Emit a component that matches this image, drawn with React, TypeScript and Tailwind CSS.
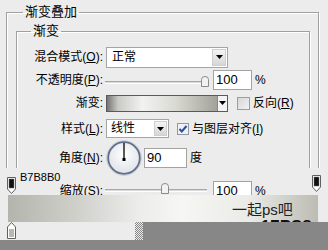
import React from "react";

const Tri = () => (
  <svg width="7" height="4" viewBox="0 0 7 4">
    <path d="M0 0h7L3.5 4z" fill="#000" />
  </svg>
);

const U = ({ c }: { c: string }) => <span className="underline underline-offset-[1px]">{c}</span>;

function Label({ children }: { children: React.ReactNode }) {
  return (
    <div className="w-[86px] shrink-0 text-right whitespace-nowrap leading-[14px]">{children}</div>
  );
}

function Slider({ thumb, thumbTop, trackTop }: { thumb: number; thumbTop: number; trackTop: number }) {
  return (
    <div className="relative h-full w-[110px] shrink-0">
      <div
        className="absolute left-[2px] right-[6px] h-[3px] border-t border-b border-t-[#a8a8a8] border-b-white bg-[#dadada]"
        style={{ top: trackTop }}
      />
      <svg className="absolute" style={{ left: thumb, top: thumbTop }} width="8" height="11" viewBox="0 0 8 11">
        <path d="M0.5 10.5V3.5Q0.5 0.5 4 0.5Q7.5 0.5 7.5 3.5V10.5Z" fill="#f2f2f2" stroke="#8a8a8a" />
      </svg>
    </div>
  );
}

function NumBox({ v, w }: { v: string; w: string }) {
  return (
    <div className={`${w} h-[20px] border border-[#a3a3a3] bg-white pl-[2px] text-[13px] leading-[18px]`}>{v}</div>
  );
}

function CheckOff() {
  return <div className="h-[13px] w-[13px] border border-[#9d9d9d] bg-gradient-to-br from-[#d6d6d6] to-[#f3f3f3]" />;
}

function CheckOn() {
  return (
    <svg width="12" height="12" viewBox="0 0 12 12">
      <rect x="0.5" y="0.5" width="11" height="11" fill="#eef0f4" stroke="#8e98a8" />
      <path d="M2.5 6l2.3 2.5L9.5 3" fill="none" stroke="#2a4fa0" strokeWidth="2" />
    </svg>
  );
}

function MarkerDown({ dark }: { dark: boolean }) {
  return (
    <svg width="9" height="17" viewBox="0 0 9 17">
      <path d="M0.5 0.5H8.5V12L4.5 16.5L0.5 12Z" fill="#fff" stroke="#606060" />
      <rect x="2" y="2" width="5" height="9" fill={dark ? "#111" : "#b7b8b0"} stroke="#707070" strokeWidth="0.5" />
    </svg>
  );
}

function MarkerUp() {
  return (
    <svg width="9" height="17" viewBox="0 0 9 17">
      <path d="M0.5 16.5H8.5V5L4.5 0.5L0.5 5Z" fill="#fff" stroke="#606060" />
      <rect x="2" y="7" width="5" height="8" fill="#b7b8b0" />
    </svg>
  );
}

function Dial() {
  return (
    <svg width="38" height="36" viewBox="0 0 38 36">
      <defs>
        <radialGradient id="dg" cx="50%" cy="40%" r="60%">
          <stop offset="0" stopColor="#ffffff" />
          <stop offset="1" stopColor="#dfe2e8" />
        </radialGradient>
      </defs>
      <circle cx="19" cy="18" r="17.3" fill="none" stroke="#c3cbd8" strokeWidth="1" />
      <circle cx="19" cy="18" r="15.8" fill="url(#dg)" stroke="#5e6e88" strokeWidth="1.8" />
      <line x1="19" y1="19" x2="19" y2="3" stroke="#000" strokeWidth="1.3" />
      <rect x="17.5" y="18" width="3" height="3" fill="#000" />
    </svg>
  );
}

export default function App() {
  return (
    <div className="relative h-[250px] w-[328px] overflow-hidden bg-[#ececec] text-[12px] text-black font-['Liberation_Sans','Noto_Sans_CJK_SC',sans-serif]">
      <fieldset className="ml-[6px] mt-[4px] h-[260px] w-[313px] border border-[#a0a0a0] shadow-[1px_1px_0_#fff,inset_1px_1px_0_#fff]">
        <legend className="ml-[16px] px-[2px] text-[13px] leading-[16px]">渐变叠加</legend>
        <fieldset className="ml-[9px] mt-[3px] h-[230px] w-[294px] border border-[#a0a0a0] shadow-[1px_1px_0_#fff,inset_1px_1px_0_#fff]">
          <legend className="ml-[14px] px-[2px] text-[13px] leading-[16px]">渐变</legend>
          <div className="flex flex-col pt-[7px]">
            {/* row 1 */}
            <div className="flex h-[22px] items-center">
              <Label>混合模式(<U c="O" />):</Label>
              <div className="ml-[3px] flex h-[21px] w-[122px] border border-[#a5a5a5] bg-white">
                <div className="flex-1 pl-[5px] leading-[19px]">正常</div>
                <div className="m-[1px] flex w-[14px] items-center justify-center border border-[#cfcfcf] bg-gradient-to-b from-[#f4f4f4] to-[#d6d6d6]">
                  <Tri />
                </div>
              </div>
            </div>
            {/* row 2 */}
            <div className="mt-[1px] flex h-[22px] items-center">
              <Label>不透明度(<U c="P" />):</Label>
              <Slider thumb={98} thumbTop={7} trackTop={12} />
              <NumBox v="100" w="w-[39px]" />
              <div className="ml-[3px]">%</div>
            </div>
            {/* row 3 */}
            <div className="mt-[3px] flex h-[18px] items-center">
              <Label>渐变:</Label>
              <div className="ml-[3px] flex h-[17px] w-[122px] border border-[#5a5a5a]">
                <div className="flex-1 bg-[linear-gradient(to_right,#747474_0%,#c9c9c5_10%,#f2f2f0_32%,#dadad4_62%,#a2a29a_100%)]" />
                <div className="flex w-[10px] items-center justify-center border-l border-[#8a8a8a] bg-[#f4f4f4]">
                  <Tri />
                </div>
              </div>
              <div className="ml-[9px]">
                <CheckOff />
              </div>
              <div className="ml-[3px] leading-[14px]">
                反向(<U c="R" />)
              </div>
            </div>
            {/* row 4 */}
            <div className="mt-[7px] flex h-[19px] items-center">
              <Label>样式(<U c="L" />):</Label>
              <div className="ml-[3px] flex h-[19px] w-[63px] border border-[#a5a5a5] bg-white">
                <div className="flex-1 pl-[4px] leading-[17px]">线性</div>
                <div className="m-[1px] flex w-[13px] items-center justify-center border border-[#cfcfcf] bg-gradient-to-b from-[#f4f4f4] to-[#d6d6d6]">
                  <Tri />
                </div>
              </div>
              <div className="ml-[8px]">
                <CheckOn />
              </div>
              <div className="ml-[3px] leading-[14px]">
                与图层对齐(<U c="I" />)
              </div>
            </div>
            {/* row 5 */}
            <div className="mt-[1px] flex h-[37px] items-center">
              <Label>角度(<U c="N" />):</Label>
              <div className="ml-[2px]">
                <Dial />
              </div>
              <div className="ml-[1px]">
                <NumBox v="90" w="w-[43px]" />
              </div>
              <div className="ml-[3px]">度</div>
            </div>
            {/* row 6 */}
            <div className="mt-[4px] flex h-[22px] items-center">
              <Label>缩放(<U c="S" />):</Label>
              <Slider thumb={58} thumbTop={3} trackTop={9} />
              <NumBox v="100" w="w-[39px]" />
              <div className="ml-[3px]">%</div>
            </div>
          </div>
        </fieldset>
      </fieldset>

      {/* gradient editor overlay */}
      <div className="absolute left-0 top-[168px] flex h-[82px] w-[328px] flex-col">
        <div className="flex h-[27px] justify-between">
          <div className="relative flex h-full w-[56px] bg-[#ececec]">
            <div className="ml-[7px] mt-[9px]">
              <MarkerDown dark />
            </div>
            <div className="ml-[4px] mt-[3px] whitespace-nowrap text-[11px] leading-[13px]">B7B8B0</div>
          </div>
          <div className="flex h-full w-[32px] bg-[#ececec]">
            <div className="ml-[16px] mt-[7px]">
              <MarkerDown dark />
            </div>
          </div>
        </div>
        <div className="h-[27px] bg-[#ececec] pl-[8px]">
          <div className="relative h-[27px] w-[310px] overflow-hidden bg-[linear-gradient(to_right,#b3b4ac_0%,#cfd0ca_22%,#ececea_42%,#f6f6f4_56%,#eaeae6_78%,#bcbcb4_100%)]">
            <div className="absolute left-[224px] top-[7px] whitespace-nowrap text-[15px] leading-[15px] text-[#222]">
              一起ps吧
            </div>
            <div className="absolute left-[209px] top-[23px] whitespace-nowrap text-[17px] font-bold leading-[17px] text-[#111]">
              www.17PS8.COM
            </div>
          </div>
        </div>
        <div className="flex h-[18px]">
          <div className="flex w-[135px] bg-[#ececec]">
            <div className="ml-[7px]">
              <MarkerUp />
            </div>
          </div>
          <div className="w-[8px] bg-[length:2px_2px] bg-[image:repeating-conic-gradient(#878787_0_25%,#ececec_0_50%)]" />
          <div className="flex-1 bg-[#878787]" />
        </div>
        <div className="h-[10px] bg-[#878787]" />
      </div>
    </div>
  );
}
